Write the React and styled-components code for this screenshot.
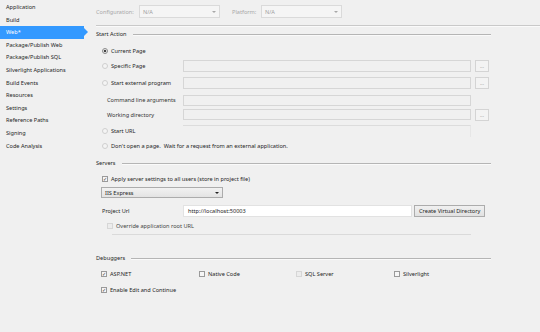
import React from "react";
import styled, { createGlobalStyle } from "styled-components";

const Global = createGlobalStyle`
  html, body { margin: 0; padding: 0; background: #f0f0f0; }
  body { font-family: "Noto Sans", "Open Sans", sans-serif; font-size: 5.6px; color: #1e1e1e; }
  * { box-sizing: border-box; }
`;

const Page = styled.div`
  display: flex;
  width: 540px;
  height: 332px;
  overflow: hidden;
  background: #f0f0f0;
`;

const Sidebar = styled.div`
  width: 88px;
  flex: none;
  padding-top: 1px;
  display: flex;
  flex-direction: column;
`;

const NavItem = styled.div`
  position: relative;
  height: 12.6px;
  line-height: 12.6px;
  padding-left: 6px;
  width: 84px;
  white-space: nowrap;
  color: ${(p) => (p.$active ? "#ffffff" : "#1e1e1e")};
  background: ${(p) => (p.$active ? "#3399ff" : "transparent")};
  &::after {
    content: "";
    display: ${(p) => (p.$active ? "block" : "none")};
    position: absolute;
    right: -4px;
    top: 50%;
    margin-top: -4px;
    border-left: 4px solid #3399ff;
    border-top: 4px solid transparent;
    border-bottom: 4px solid transparent;
  }
`;

const Main = styled.div`
  flex: 1;
  display: flex;
  flex-direction: column;
  padding-left: 8px;
`;

const TopBar = styled.div`
  display: flex;
  align-items: center;
  height: 13px;
  margin-top: 5px;
  color: #a8a8a8;
`;

const TopLabel = styled.span`
  width: ${(p) => p.$w}px;
`;

const Combo = styled.div`
  display: flex;
  align-items: center;
  justify-content: space-between;
  width: ${(p) => p.$w}px;
  height: ${(p) => p.$h || 13}px;
  margin-right: ${(p) => p.$mr || 0}px;
  padding: 0 3px 0 3px;
  border: 1px solid ${(p) => (p.$enabled ? "#acacac" : "#dadada")};
  background: ${(p) => (p.$enabled ? "linear-gradient(#f2f2f2, #e3e3e3)" : "#f5f5f5")};
  color: ${(p) => (p.$enabled ? "#1e1e1e" : "#a0a0a0")};
`;

const Arrow = styled.span`
  width: 0;
  height: 0;
  border-left: 2px solid transparent;
  border-right: 2px solid transparent;
  border-top: 2.5px solid ${(p) => (p.$enabled ? "#222" : "#a8a8a8")};
`;

const Separator = styled.div`
  margin-top: 7px;
  height: 2px;
  border-top: 1px solid #c9c9c9;
  border-bottom: 1px solid #fafafa;
`;

const Header = styled.div`
  display: flex;
  align-items: center;
  height: 10px;
  margin-top: ${(p) => p.$mt}px;
  width: 395px;
  color: #1e1e1e;
  &::after {
    content: "";
    flex: 1;
    height: 1px;
    background: #b5b5b5;
    margin-left: 6px;
    box-shadow: 0 1px 0 #fafafa;
  }
`;

const Row = styled.div`
  display: flex;
  align-items: center;
  height: ${(p) => p.$h || 12}px;
  margin-top: ${(p) => p.$mt || 0}px;
  padding-left: ${(p) => p.$pl || 0}px;
  white-space: nowrap;
`;

const LabelCell = styled.div`
  width: ${(p) => p.$w || 87}px;
  flex: none;
  display: flex;
  align-items: center;
  padding-left: ${(p) => p.$pl || 0}px;
  color: ${(p) => (p.$dim ? "#333" : "#1e1e1e")};
`;

const TextBox = styled.div`
  width: ${(p) => p.$w || 288}px;
  height: ${(p) => p.$h || 12}px;
  flex: none;
  display: flex;
  align-items: center;
  padding-left: 4px;
  border: 1px solid ${(p) => (p.$white ? "#e2e2e2" : "#d6d6d6")};
  background: ${(p) => (p.$white ? "#ffffff" : "#f0f0f0")};
  color: #1e1e1e;
`;

const TopEdge = styled.div`
  width: 288px;
  height: 12px;
  border-top: 1px solid #dcdcdc;
  border-right: 1px solid #e6e6e6;
  align-self: flex-start;
`;

const DotButton = styled.div`
  width: 14px;
  height: 12px;
  margin-left: 4px;
  margin-top: 1px;
  flex: none;
  border: 1px solid #d4d4d4;
  background: #f3f3f3;
  color: #a0a0a0;
  font-size: 5px;
  display: flex;
  align-items: center;
  justify-content: center;
  line-height: 1;
`;

const Button = styled.div`
  height: 12px;
  padding: 0 4px;
  margin-left: 2px;
  border: 1px solid #acacac;
  background: linear-gradient(#f0f0f0, #e1e1e1);
  display: flex;
  align-items: center;
  color: #1e1e1e;
`;

const Radio = styled.span`
  width: 6px;
  height: 6px;
  border-radius: 50%;
  flex: none;
  margin-right: 3px;
  border: 1px solid ${(p) => (p.$on ? "#8a8a8a" : "#cfcfcf")};
  background: ${(p) => (p.$on ? "radial-gradient(circle, #444 0 1.4px, #f4f4f4 1.6px)" : "#f4f4f4")};
`;

const Check = styled.span`
  width: 6px;
  height: 6px;
  flex: none;
  margin-right: 3px;
  border: 1px solid ${(p) => (p.$dim ? "#d6d6d6" : "#9a9a9a")};
  background: ${(p) => (p.$dim ? "#ececec" : "#f6f6f6")};
  display: flex;
  align-items: center;
  justify-content: center;
  font-size: 5px;
  line-height: 1;
  color: #333;
`;

const Opt = styled.div`
  display: flex;
  align-items: center;
  width: ${(p) => (p.$w ? p.$w + "px" : "auto")};
  flex: none;
  color: ${(p) => (p.$dim ? "#444" : "#1e1e1e")};
`;

const Rule = styled.div`
  margin-top: ${(p) => p.$mt}px;
  margin-left: ${(p) => p.$ml}px;
  width: ${(p) => p.$w}px;
  height: 1px;
  background: #dadada;
`;

const navItems = [
  "Application",
  "Build",
  "Web*",
  "Package/Publish Web",
  "Package/Publish SQL",
  "Silverlight Applications",
  "Build Events",
  "Resources",
  "Settings",
  "Reference Paths",
  "Signing",
  "Code Analysis",
];

const CheckMark = () => <>✓</>;

export default function App() {
  return (
    <Page>
      <Global />
      <Sidebar>
        {navItems.map((n) => (
          <NavItem key={n} $active={n === "Web*"}>
            {n}
          </NavItem>
        ))}
      </Sidebar>
      <Main>
        <TopBar>
          <TopLabel $w={43}>Configuration:</TopLabel>
          <Combo $w={81} $mr={12}>
            <span>N/A</span>
            <Arrow />
          </Combo>
          <TopLabel $w={29}>Platform:</TopLabel>
          <Combo $w={81}>
            <span>N/A</span>
            <Arrow />
          </Combo>
        </TopBar>
        <Separator />

        <Header $mt={2}>Start Action</Header>
        <Row $mt={6} $pl={6}>
          <Opt>
            <Radio $on />
            Current Page
          </Opt>
        </Row>
        <Row $mt={2} $h={13} $pl={6}>
          <LabelCell $w={81}>
            <Radio />
            Specific Page
          </LabelCell>
          <TextBox />
          <DotButton>...</DotButton>
        </Row>
        <Row $mt={4} $h={13} $pl={6}>
          <LabelCell $w={81}>
            <Radio />
            Start external program
          </LabelCell>
          <TextBox />
          <DotButton>...</DotButton>
        </Row>
        <Row $mt={5} $h={12} $pl={11}>
          <LabelCell $w={76} $dim>Command line arguments</LabelCell>
          <TextBox $h={11} />
        </Row>
        <Row $mt={2} $h={13} $pl={11}>
          <LabelCell $w={76} $dim>Working directory</LabelCell>
          <TextBox $h={11} />
          <DotButton>...</DotButton>
        </Row>
        <Row $mt={4} $h={12} $pl={6}>
          <LabelCell $w={81}>
            <Radio />
            Start URL
          </LabelCell>
          <TopEdge />
        </Row>
        <Row $mt={3} $pl={6}>
          <Opt>
            <Radio />
            Don't open a page.&nbsp; Wait for a request from an external application.
          </Opt>
        </Row>

        <Header $mt={6}>Servers</Header>
        <Row $mt={5} $pl={6}>
          <Opt>
            <Check>
              <CheckMark />
            </Check>
            Apply server settings to all users (store in project file)
          </Opt>
        </Row>
        <Row $mt={2} $h={11} $pl={5}>
          <Combo $w={122} $h={11} $enabled>
            <span>IIS Express</span>
            <Arrow $enabled />
          </Combo>
        </Row>
        <Row $mt={7} $h={12} $pl={6}>
          <LabelCell $w={81}>Project Url</LabelCell>
          <TextBox $w={229} $white>
            http://localhost:50003
          </TextBox>
          <Button>Create Virtual Directory</Button>
        </Row>
        <Row $mt={3} $pl={11}>
          <Opt $dim>
            <Check $dim />
            Override application root URL
          </Opt>
        </Row>
        <Rule $mt={2} $ml={16} $w={359} />

        <Header $mt={18}>Debuggers</Header>
        <Row $mt={5} $pl={5}>
          <Opt $w={98}>
            <Check>
              <CheckMark />
            </Check>
            ASP.NET
          </Opt>
          <Opt $w={97}>
            <Check />
            Native Code
          </Opt>
          <Opt $w={98}>
            <Check $dim />
            SQL Server
          </Opt>
          <Opt>
            <Check />
            Silverlight
          </Opt>
        </Row>
        <Row $mt={4} $pl={5}>
          <Opt>
            <Check>
              <CheckMark />
            </Check>
            Enable Edit and Continue
          </Opt>
        </Row>
      </Main>
    </Page>
  );
}
